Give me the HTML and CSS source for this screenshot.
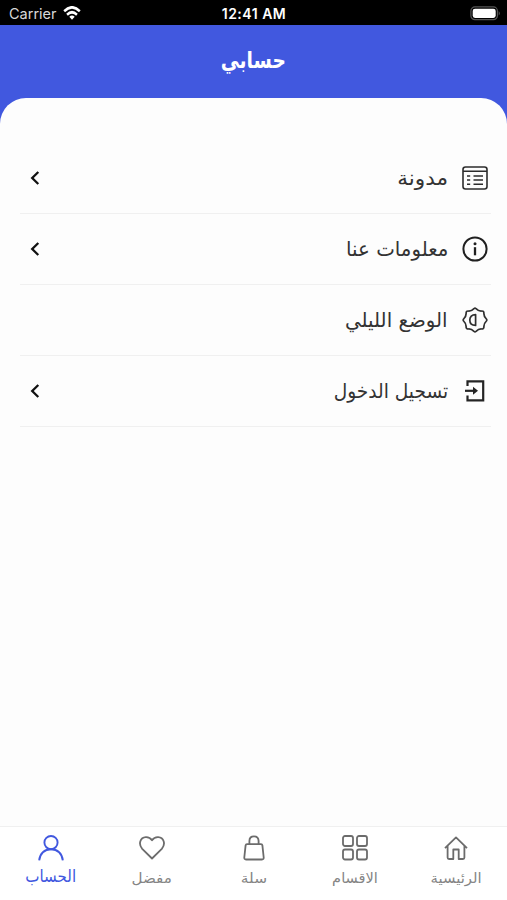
FILE: index.html
```html
<!DOCTYPE html>
<html lang="ar" dir="rtl">
<head>
<meta charset="utf-8">
<meta name="viewport" content="width=device-width">
<title>حسابي</title>
<link rel="stylesheet" href="styles.css">
</head>
<body>
<div class="status" dir="ltr">
  <div class="carrier"><span>Carrier</span>
    <svg width="18" height="14" viewBox="0 0 20 14" preserveAspectRatio="none" fill="none" stroke="#fff" stroke-width="2.7"><path d="M1.3 5.3Q10-2.6 18.7 5.3M4.5 8.7Q10 3.8 15.5 8.7"/><path d="M7 10.7Q10 8.3 13 10.7L10 13.7Z" fill="#fff" stroke="none"/></svg>
  </div>
  <div class="clock">12:41 AM</div>
  <svg class="battery" width="31" height="15" viewBox="0 0 31 15"><rect x=".9" y=".9" width="26.5" height="12.8" rx="4" fill="none" stroke="#555" stroke-width="1.2"/><rect x="2.7" y="2.7" width="23" height="9.2" rx="2.3" fill="#fff"/><path d="M28.7 5Q31 7.3 28.7 9.6Z" fill="#555"/></svg>
</div>
<header class="header"><h1>حسابي</h1></header>
<main class="sheet">
  <a class="row">
    <svg class="icon" viewBox="0 0 26 26" fill="none" stroke="#2c2c2c" stroke-width="1.6"><rect x="1" y="2" width="24" height="22" rx="2.5"/><path d="M1 6.2H25M5 11h3.2M5 15h3.2M5 19.2h3.2M11.5 11H21M11.5 15H21M11.5 19.2H21"/></svg>
    <span class="label w-blog">مدونة</span>
    <svg class="chevron" viewBox="0 0 10 16"><path d="M8.3 2L2.2 8L8.3 14"/></svg>
  </a>
  <a class="row">
    <svg class="icon" viewBox="0 0 26 26" fill="none" stroke="#202020" stroke-width="2"><circle cx="13" cy="13" r="11.6"/><path d="M13 11.2V19.3" stroke-width="2.3"/><circle cx="13" cy="7.8" r="1.5" fill="#202020" stroke="none"/></svg>
    <span class="label w-about">معلومات عنا</span>
    <svg class="chevron" viewBox="0 0 10 16"><path d="M8.3 2L2.2 8L8.3 14"/></svg>
  </a>
  <div class="row">
    <svg class="icon" viewBox="0 0 26 26" fill="none" stroke="#303030" stroke-width="1.7" stroke-linejoin="round"><path d="M12 1.6Q13 .8 14 1.6Q16.8 4.4 19.8 4Q21.8 3.9 21.9 6Q21.6 9.2 24.4 12Q25.2 13 24.4 14Q21.6 16.8 21.9 20Q21.8 22 19.8 22Q16.8 21.6 14 24.4Q13 25.2 12 24.4Q9.2 21.6 6.2 22Q4.2 22 4.1 20Q4.4 16.8 1.6 14Q.8 13 1.6 12Q4.4 9.2 4.1 6Q4.2 3.9 6.2 4Q9.2 4.4 12 1.6Z"/><path d="M13.6 7.6V18.4C9.8 18.4 7.8 16 7.8 13S9.8 7.6 13.6 7.6Z"/></svg>
    <span class="label w-night">الوضع الليلي</span>
  </div>
  <a class="row">
    <svg class="icon" viewBox="0 0 26 26" fill="none" stroke="#242424" stroke-width="2.2"><path d="M5.5 8V3.3H21.2V22.3H5.5V17.5"/><path d="M3 12.8H14"/><path d="M11 8.8L16 12.8L11 16.8Z" fill="#242424" stroke="none"/></svg>
    <span class="label w-login">تسجيل الدخول</span>
    <svg class="chevron" viewBox="0 0 10 16"><path d="M8.3 2L2.2 8L8.3 14"/></svg>
  </a>
</main>
<nav class="tabs">
  <a class="tab"><svg viewBox="0 0 26 26"><path d="M2 13.2L13 2.4L24 13.2M4.6 11V22.5Q4.6 24 6 24H10.3V14.5H15.7V24H20Q21.4 24 21.4 22.5V11"/></svg><span class="w-home">الرئيسية</span></a>
  <a class="tab"><svg viewBox="0 0 26 26"><rect x="1" y="1" width="10" height="10" rx="2"/><rect x="15" y="1" width="10" height="10" rx="2"/><rect x="1" y="14.5" width="10" height="10" rx="2"/><rect x="15" y="14.5" width="10" height="10" rx="2"/></svg><span class="w-cats">الاقسام</span></a>
  <a class="tab"><svg viewBox="0 0 26 26"><path d="M6 9.2H20Q21.2 9.2 21.4 10.4L22.7 22.5Q22.8 24.5 21 24.5H5Q3.2 24.5 3.3 22.5L4.6 10.4Q4.8 9.2 6 9.2ZM8.4 9V6Q8.4 1.3 13 1.3T17.6 6V9"/></svg><span class="w-cart">سلة</span></a>
  <a class="tab"><svg viewBox="0 0 26 26"><path d="M13 23.5L3.2 13.8C-1 9 1.3 2.4 6.8 2.1Q10.8 1.9 13 5.2Q15.2 1.9 19.2 2.1C24.7 2.4 27 9 22.8 13.8Z"/></svg><span class="w-fav">مفضل</span></a>
  <a class="tab active"><svg viewBox="0 0 26 26"><circle cx="13" cy="7.6" r="6.6"/><path d="M1.2 25.4C1.8 18.5 6.5 14.2 13 14.2S24.2 18.5 24.8 25.4"/></svg><span class="w-account">الحساب</span></a>
</nav>
</body>
</html>
```
FILE: styles.css
```css
* { box-sizing: border-box; }
body {
  margin: 0;
  height: 900px;
  display: flex;
  flex-direction: column;
  overflow: hidden;
  background: #4158df;
  font-family: "DejaVu Sans", sans-serif;
}
.status {
  height: 25px;
  padding: 2px 6px 0 9px;
  display: grid;
  grid-template-columns: 1fr auto 1fr;
  align-items: center;
  background: #000;
  color: #fff;
  font: 14.5px Inter, sans-serif;
}
.carrier { display: flex; align-items: center; gap: 6px; color: #d8d8d8; }
.carrier svg { margin-top: -2px; }
.clock { font-weight: 600; font-size: 14px; letter-spacing: .5px; transform: translateX(-1px); }
.battery { justify-self: end; margin-top: -1px; }
.header {
  height: 73px;
  padding-bottom: 3px;
  display: flex;
  align-items: center;
  justify-content: center;
  color: #fff;
}
h1 { margin: 0; font-size: 23px; line-height: 30px; transform: scaleX(.81); }
.sheet {
  flex: 1;
  padding: 45px 16px 0 20px;
  background: #fdfdfd;
  border-radius: 26px 26px 0 0;
}
.row {
  height: 71px;
  padding: 0 3px 0 10px;
  display: flex;
  align-items: center;
  border-bottom: 1px solid #f0f0f0;
}
.icon { width: 26px; height: 26px; flex: none; }
.label {
  margin-right: 14px;
  color: #333;
  font-size: 20px;
  line-height: 28px;
  white-space: nowrap;
  transform-origin: right center;
}
.w-blog { transform: scaleX(1.08); }
.w-about, .w-night { transform: scaleX(.99); }
.w-login { transform: scaleX(.93); }
.chevron {
  width: 10px;
  height: 16px;
  margin-right: auto;
  fill: none;
  stroke: #111;
  stroke-width: 2.3;
}
.tabs {
  height: 74px;
  padding-top: 8px;
  display: grid;
  grid-template-columns: repeat(5, 1fr);
  background: #fff;
  border-top: 1px solid #f0f0f0;
}
.tab {
  display: flex;
  flex-direction: column;
  align-items: center;
  color: #858585;
  font-size: 14px;
  line-height: 20px;
  gap: 7px;
}
.tab svg { width: 26px; height: 26px; fill: none; stroke: #6c6c6c; stroke-width: 1.8; stroke-linejoin: round; }
.tab.active { color: #4158df; font-size: 17px; gap: 5px; }
.tab.active svg { stroke: #4158df; stroke-width: 1.9; }
.w-home { transform: scaleX(1.06); }
.w-cats { transform: scaleX(1.04); }
.w-cart { transform: scaleX(1.1); }
.w-fav { transform: scaleX(1.08); }
.w-account { transform: scaleX(.89); }
```
